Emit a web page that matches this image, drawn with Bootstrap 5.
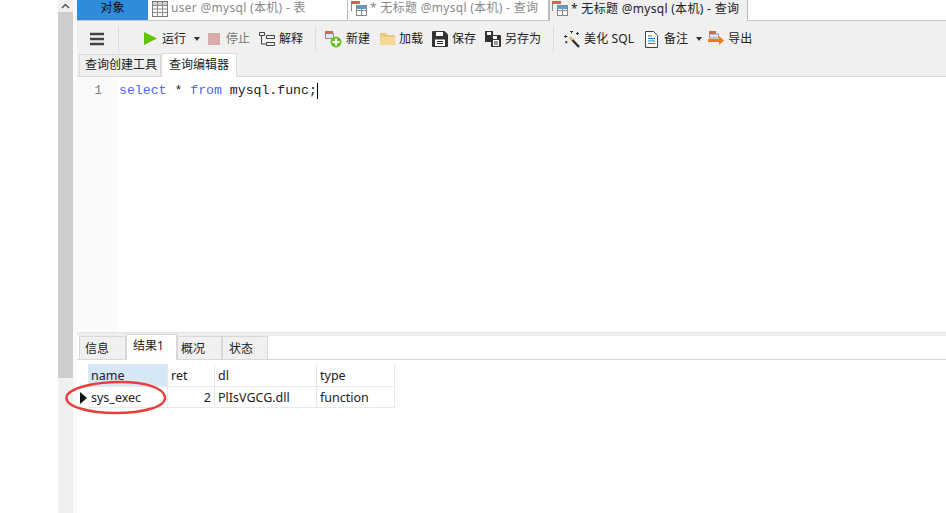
<!DOCTYPE html>
<html lang="zh"><head><meta charset="utf-8"><title>Navicat</title>
<link href="https://cdn.jsdelivr.net/npm/bootstrap@5.3.0/dist/css/bootstrap.min.css" rel="stylesheet">
<style>
html,body{height:513px;overflow:hidden;background:#fff}
body{font:12.5px/1.2 "Noto Sans","Noto Sans CJK SC",sans-serif;color:#222}
.shell{height:513px}
.leftgap{width:58px}
.vbar{width:15px;background:#f0f0f0}
.vbar-arrow{height:12px}
.vbar-thumb{height:366px;background:#cdcdcd}
.sidegap{width:4px;background:#fafafa}
.mainarea{width:869px}
.tabrow{height:21px;border-bottom:1px solid #c8c8c8}
.objtab{width:71px;background:#2f8bdc;color:#111;font-size:12px;padding-bottom:3px}
.doctab{width:200px;color:#8a8a8a;border-right:1px solid #bbb;font-size:12px;letter-spacing:.3px;padding:0 0 3px 4px;white-space:nowrap;overflow:hidden}
.doctab svg{margin-right:3px;flex-shrink:0}
.doctab.t2{width:201px;padding-left:3px}
.doctab.t3{width:199px;padding-left:2px;color:#222;border-left:1px solid #bbb;border-right:1px solid #bbb;height:21px;background:#f0f0f0}
.tooltray{height:33px;background:#f0f0f0;padding:3px 0 0 13px;font-size:12px;white-space:nowrap}
.tsep{width:1px;height:26px;background:#dcdcdc}
.tool{display:flex;align-items:center;gap:4px}
.muted-item{color:#777}
.wgap5{gap:5px}.wgap6{gap:6px}.wgap3{gap:3px}
.sqlword{width:51px;letter-spacing:.1px}
.m6{margin-left:6px}.m8{margin-left:8px}.m9{margin-left:9px}.m10{margin-left:10px}.m12{margin-left:12px}.m14{margin-left:14px}.m25{margin-left:25px}
.subtabs{height:23px;background:#f0f0f0;padding-left:2px;border-bottom:1px solid #d8d8d8}
.stab{height:22px;width:82px;border:1px solid #d8d8d8;border-bottom:0;padding-left:5px;background:#f0f0f0;font-size:12px;white-space:nowrap}
.stab.on{height:24px;width:76px;background:#fff;margin-bottom:-1px;padding-left:7px;border-color:#dcdcdc}
.editor{height:255px;font-family:"Liberation Mono","DejaVu Sans Mono",monospace;font-size:13.2px;line-height:1}
.gutter{width:41px;background:#fafafa;color:#7a7a7a;text-align:right;padding:8px 16px 0 0;font-size:12.5px}
.code{padding:6px 0 0 1px;color:#222}
.kw{color:#5468ee}
.caret-line{border-right:1px solid #000;display:inline-block;height:16px;line-height:16px}
.split{height:4px;background:#efefef;border-top:1px solid #e4e4e4}
.restabs{height:24px;padding-left:2px;border-bottom:1px solid #d8d8d8}
.rtab{height:23px;border:1px solid #d8d8d8;border-bottom:0;background:#f0f0f0;font-size:12px;padding-top:2px}
.rtab.on{height:26px;background:#fff;margin-bottom:-1px;padding-top:0;padding-bottom:3px}
.r1{width:47px;padding-left:5px}.r2{width:51px;padding-left:6px}.r3{width:45px;padding-left:3px}.r4{width:46px;padding-left:6px}
.gridwrap{padding:4px 0 0 11px;position:relative;font-size:12.5px}
.gridrow{width:307px;border-bottom:1px solid #e8e8e8}
.h22{height:23px}.h21{height:21px}
.cell{border-right:1px solid #e8e8e8;padding:0 3px;height:100%;display:flex;align-items:center}
.c1{width:80px}.c2{width:47px}.c3{width:102px}.c4{width:78px}
.headcell{background:#d6e7f6}
.rowmark{position:absolute;left:3px;top:32px;width:0;height:0;border-left:7px solid #111;border-top:6px solid transparent;border-bottom:6px solid transparent}
.redcircle{position:absolute;left:-12px;top:20px}
</style></head><body>
<div class="shell d-flex">
 <div class="leftgap flex-shrink-0"></div>
 <div class="vbar flex-shrink-0 d-flex flex-column">
  <div class="vbar-arrow d-flex justify-content-center align-items-center"><svg width="9" height="6" viewBox="0 0 9 6"><path d="M1 5l3.500-3.500L8 5" fill="none" stroke="#555" stroke-width="1.500"/></svg></div>
  <div class="vbar-thumb"></div>
 </div>
 <div class="sidegap flex-shrink-0"></div>
 <div class="mainarea flex-shrink-0 d-flex flex-column">
  <div class="tabrow d-flex">
   <div class="objtab d-flex align-items-center justify-content-center">对象</div>
   <div class="doctab d-flex align-items-center"><svg width="16" height="16" viewBox="0 0 16 16"><rect x=".5" y=".5" width="15" height="15" fill="#fff" stroke="#777"/><rect x="1" y="1" width="14" height="3" fill="#cfd3d8"/><path d="M.5 4.500h15M.5 8h15M.5 11.500h15M5.500 1v14M10.500 1v14" stroke="#888"/></svg><span>user @mysql (本机) - 表</span></div>
   <div class="doctab t2 d-flex align-items-center"><svg width="16" height="16" viewBox="0 0 16 16"><rect x="0" y="0" width="9" height="3" fill="#d4644e"/><path d="M.5 3v7" stroke="#888"/><rect x="5.500" y="4.500" width="10" height="10" fill="#fff" stroke="#888"/><path d="M5.500 9.500h10M10.500 5v10" stroke="#888"/><rect x="6" y="5" width="9" height="3" fill="#5a9bd5"/></svg><span>* 无标题 @mysql (本机) - 查询</span></div>
   <div class="doctab t3 d-flex align-items-center"><svg width="16" height="16" viewBox="0 0 16 16"><rect x="0" y="0" width="9" height="3" fill="#d4644e"/><path d="M.5 3v7" stroke="#888"/><rect x="5.500" y="4.500" width="10" height="10" fill="#fff" stroke="#888"/><path d="M5.500 9.500h10M10.500 5v10" stroke="#888"/><rect x="6" y="5" width="9" height="3" fill="#5a9bd5"/></svg><span>* 无标题 @mysql (本机) - 查询</span></div>
  </div>
  <div class="tooltray d-flex align-items-center">
   <svg width="14" height="14" viewBox="0 0 14 14"><path d="M0 2h14M0 7h14M0 12h14" stroke="#444" stroke-width="2.500"/></svg>
   <div class="tsep m14"></div>
   <div class="tool wgap5 m25"><svg width="13" height="13" viewBox="0 0 13 13"><path d="M0 0l13 6.500L0 13z" fill="#5fc400"/></svg><span>运行</span></div>
   <svg class="m8" width="6" height="4" viewBox="0 0 6 4"><path d="M0 0h6L3 4z" fill="#333"/></svg>
   <div class="tool wgap6 muted-item m8"><svg width="12" height="12"><rect width="12" height="12" fill="#d8acaa"/></svg><span>停止</span></div>
   <div class="tool m9"><svg width="16" height="15" viewBox="0 0 16 15"><path d="M.5.500h5v3h-5zM7.500 3.500h8v3h-8zM7.500 10.500h8v3h-8zM2.500 4v8h5" fill="none" stroke="#444"/></svg><span>解释</span></div>
   <div class="tsep m12"></div>
   <div class="tool m9"><svg width="17" height="17" viewBox="0 0 17 17"><rect x="0" y="0" width="8" height="2.500" fill="#d4644e"/><rect x="0.500" y="2.500" width="8" height="5" fill="#dfe8f2" stroke="#777" stroke-width=".8"/><circle cx="11" cy="11" r="5.500" fill="#6cc12a"/><path d="M11 7.500v7M7.500 11h7" stroke="#fff" stroke-width="2"/></svg><span>新建</span></div>
   <div class="tool wgap3 m10"><svg width="16" height="14" viewBox="0 0 16 14"><path d="M0 1h6l1.500 2H15v10H0z" fill="#e8c77f"/><path d="M1 5h15l-2 8H0z" fill="#f3d896"/></svg><span>加载</span></div>
   <div class="tool m9"><svg width="16" height="16" viewBox="0 0 16 16"><path d="M0 1a1 1 0 011-1h11.500L16 3.500V15a1 1 0 01-1 1H1a1 1 0 01-1-1z" fill="#333"/><rect x="4" y="1" width="7" height="4" fill="#fff"/><rect x="3" y="8.500" width="10" height="6.500" fill="#fff"/><path d="M5 10.500h6M5 12.500h6" stroke="#333"/></svg><span>保存</span></div>
   <div class="tool m9"><svg width="16" height="16" viewBox="0 0 16 16"><path d="M0 0h8v11H0z" fill="#333"/><rect x="2" y="1" width="4" height="3" fill="#fff"/><path d="M6 4h9a1 1 0 011 1v10a1 1 0 01-1 1H6z" fill="#333"/><rect x="8" y="9" width="6" height="6" fill="#fff"/><rect x="8" y="5" width="4" height="3" fill="#fff"/><path d="M9 11h4M9 13h4" stroke="#333"/></svg><span>另存为</span></div>
   <div class="tsep m12"></div>
   <div class="tool m10"><svg width="16" height="17" viewBox="0 0 16 17"><path d="M6.500 7l8.500 9" stroke="#333" stroke-width="2.500"/><path d="M5.500 6l3 3" stroke="#e8c45a" stroke-width="2.500"/><path d="M0 5.500h3.500M1.700 4v3M6 .5h3M7.500 0v2.500M12 2.500h3M13.500 1v3M1 11h2.500M2.300 10v2.500" stroke="#333"/></svg><span class="sqlword">美化 SQL</span></div>
   <div class="tool wgap6 m10"><svg width="13" height="17" viewBox="0 0 13 17"><path d="M.5.500h8l4 4v12H.5z" fill="#fff" stroke="#345"/><path d="M3 5h4M3 7.500h7M3 10h7M3 12.500h7" stroke="#1b7fb5" stroke-width="1.200"/></svg><span>备注</span></div>
   <svg class="m8" width="6" height="4" viewBox="0 0 6 4"><path d="M0 0h6L3 4z" fill="#333"/></svg>
   <div class="tool m6"><svg width="16" height="16" viewBox="0 0 16 16"><rect x="1" y="0" width="7" height="3" fill="#d4644e"/><rect x="1.500" y="3" width="9" height="4" fill="#dfe8f2" stroke="#888" stroke-width=".8"/><path d="M0 8h11V5l5 4.500-5 4.500v-3H0z" fill="#ef7d12"/></svg><span>导出</span></div>
  </div>
  <div class="subtabs d-flex align-items-end">
   <div class="stab d-flex align-items-center">查询创建工具</div>
   <div class="stab on d-flex align-items-center">查询编辑器</div>
  </div>
  <div class="editor d-flex">
   <div class="gutter flex-shrink-0">1</div>
   <div class="code"><span class="caret-line"><span class="kw">select</span> * <span class="kw">from</span> mysql.func;</span></div>
  </div>
  <div class="split"></div>
  <div class="restabs d-flex align-items-end">
   <div class="rtab r1 d-flex align-items-center">信息</div>
   <div class="rtab on r2 d-flex align-items-center">结果1</div>
   <div class="rtab r3 d-flex align-items-center">概况</div>
   <div class="rtab r4 d-flex align-items-center">状态</div>
  </div>
  <div class="gridwrap flex-grow-1">
   <div class="gridrow h22 d-flex">
    <div class="cell c1 headcell">name</div><div class="cell c2">ret</div><div class="cell c3">dl</div><div class="cell c4">type</div>
   </div>
   <div class="gridrow h21 d-flex">
    <div class="cell c1">sys_exec</div><div class="cell c2 justify-content-end">2</div><div class="cell c3">PlIsVGCG.dll</div><div class="cell c4">function</div>
   </div>
   <div class="rowmark"></div>
   <svg class="redcircle" width="104" height="36" viewBox="0 0 104 36"><path d="M1.500 17C3 9 26 2 56 2c24 0 43 6 44 15 1 10-22 16-50 16C26 33 0 27 1.500 17z" fill="none" stroke="#e8403c" stroke-width="2.400"/></svg>
  </div>
 </div>
</div>
</body></html>
